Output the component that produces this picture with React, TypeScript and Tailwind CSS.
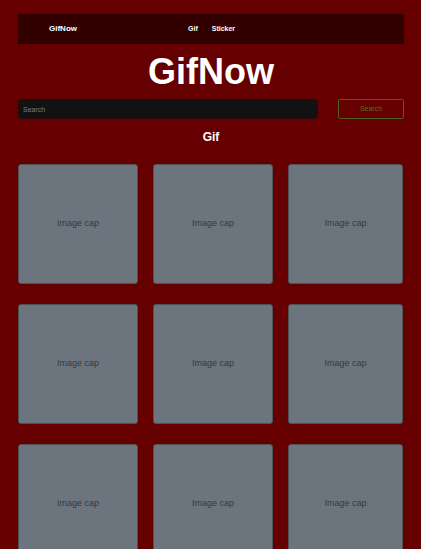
import React from 'react';

const cards = Array.from({ length: 9 }, (_, i) => i);

export default function App() {
  return (
    <div className="min-h-screen bg-[#660000] px-[18px] pt-[14px] font-['Liberation_Sans',Arial,sans-serif] overflow-hidden">
      {/* Navbar */}
      <nav className="w-[386px] h-[30px] bg-[#330000] flex items-center">
        <a href="#" className="ml-[31px] text-[8px] font-bold text-white">GifNow</a>
        <ul className="ml-[111px] flex items-center gap-[14px] text-[7px] font-bold text-white">
          <li><a href="#">Gif</a></li>
          <li><a href="#">Sticker</a></li>
        </ul>
      </nav>

      {/* Title */}
      <h1 className="mt-[8px] h-[40px] leading-[40px] text-center text-[36px] font-bold text-white w-[386px]">GifNow</h1>

      {/* Search */}
      <form className="mt-[7px] flex w-[386px] items-center" onSubmit={(e) => e.preventDefault()}>
        <input
          type="text"
          placeholder="Search"
          className="w-[300px] h-[20px] rounded-[3px] bg-[#121212] border border-[#2a0a0a] px-[4px] text-[7px] text-white placeholder:text-[#7a7f86] outline-none"
        />
        <button className="ml-[20px] w-[66px] h-[20px] rounded-[2px] border border-[#4f6317] text-[7px] text-[#5a7020]">
          Search
        </button>
      </form>

      {/* Section */}
      <h2 className="mt-[10px] w-[386px] text-center text-[12px] font-bold text-white leading-[16px]">Gif</h2>

      <div className="mt-[19px] grid grid-cols-[120px_120px_115px] gap-x-[15px] gap-y-[20px]">
        {cards.map((i) => (
          <div
            key={i}
            className="h-[120px] rounded-[3px] border border-[#4e5358] bg-[#6c757d] flex items-center justify-center text-[9px] text-[#353a40]"
          >
            Image cap
          </div>
        ))}
      </div>
    </div>
  );
}
